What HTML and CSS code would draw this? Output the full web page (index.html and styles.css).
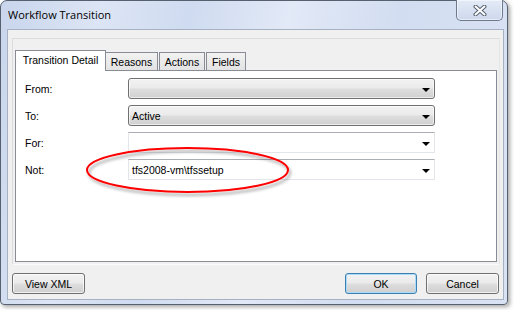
FILE: index.html
```
<!DOCTYPE html>
<html>
<head>
<meta charset="utf-8">
<link rel="stylesheet" href="styles.css">
</head>
<body>
<div class="window">
  <div class="titlebar">
    <span class="title">Workflow Transition</span>
    <div class="close">
      <svg width="14" height="11" viewBox="0 0 14 11">
        <path d="M2.5 1.5 L11.5 9.5 M11.5 1.5 L2.5 9.5" stroke="#55606e" stroke-width="4" stroke-linecap="round"/>
        <path d="M2.5 1.5 L11.5 9.5 M11.5 1.5 L2.5 9.5" stroke="#ffffff" stroke-width="2" stroke-linecap="round"/>
      </svg>
    </div>
  </div>
  <div class="client">
    <div class="group">
      <div class="tabs">
        <div class="tab selected">Transition Detail</div>
        <div class="tab t-reasons">Reasons</div>
        <div class="tab t-actions">Actions</div>
        <div class="tab t-fields">Fields</div>
      </div>
      <div class="panel">
        <div class="row">
          <span class="label">From:</span>
          <div class="combo list"><span class="value"></span><span class="arrow"></span></div>
        </div>
        <div class="row">
          <span class="label">To:</span>
          <div class="combo list"><span class="value">Active</span><span class="arrow"></span></div>
        </div>
        <div class="row">
          <span class="label">For:</span>
          <div class="combo edit"><span class="value"></span><span class="arrow"></span></div>
        </div>
        <div class="row">
          <span class="label">Not:</span>
          <div class="combo edit"><span class="value">tfs2008-vm\tfssetup</span><span class="arrow"></span></div>
        </div>
      </div>
    </div>
    <div class="buttons">
      <button class="btn btn-xml">View XML</button>
      <span class="spacer"></span>
      <button class="btn btn-ok">OK</button>
      <button class="btn btn-cancel">Cancel</button>
    </div>
  </div>
</div>
<svg class="highlight" width="230" height="70" viewBox="0 0 230 70">
  <defs>
    <filter id="sh" x="-10%" y="-30%" width="120%" height="160%">
      <feDropShadow dx="2" dy="3" stdDeviation="1.6" flood-color="#000" flood-opacity="0.35"/>
    </filter>
  </defs>
  <ellipse cx="107.5" cy="30" rx="100.5" ry="22" fill="none" stroke="#ff0000" stroke-width="2" filter="url(#sh)"/>
</svg>
</body>
</html>
```
FILE: styles.css
```
* { box-sizing: border-box; }
html, body { margin: 0; padding: 0; background: #ffffff; }
body {
  width: 514px;
  height: 310px;
  position: relative;
  overflow: hidden;
  font-family: "Liberation Sans", Arial, sans-serif;
  font-size: 10.5px;
  color: #000;
}
.window {
  width: 508px;
  height: 305px;
  border: 1px solid #56606e;
  border-radius: 7px 7px 4px 4px;
  background: linear-gradient(100deg, #c8d5ec 0%, #dce5f5 18%, #cfdbf0 34%, #e2e9f7 52%, #d2ddf1 72%, #dae3f4 100%);
  box-shadow: 2px 2px 4px rgba(0,0,0,0.35);
  padding: 0 3px 4px 6px;
  display: flex;
  flex-direction: column;
}
.titlebar {
  height: 28px;
  display: flex;
  align-items: flex-start;
}
.title {
  font-family: "Open Sans", "Noto Sans", sans-serif;
  font-size: 11px;
  line-height: 16px;
  margin-top: 6px;
  padding-left: 1px;
  color: #000;
}
.close {
  margin-left: auto;
  margin-right: 1px;
  margin-top: -1px;
  width: 47px;
  height: 21px;
  border: 1px solid #6d7a8e;
  border-top: none;
  border-radius: 0 0 5px 5px;
  background: linear-gradient(#e4ebf7, #cdd8ec);
  box-shadow: inset 0 0 0 1px rgba(255,255,255,0.5);
  display: flex;
  align-items: center;
  justify-content: center;
}
.client {
  height: 271px;
  border: 1px solid #a6b1c2;
  background: #f0f0f0;
  display: flex;
  flex-direction: column;
}
.group {
  margin: 8px 3px 0 4px;
  height: 227px;
  border: 1px solid #dcdcdc;
  border-right-color: #e6e6e6;
  border-bottom-color: #fbfbfb;
  padding: 11px 2px 2px 1px;
  display: flex;
  flex-direction: column;
}
.tabs {
  height: 20px;
  display: flex;
  align-items: flex-end;
  padding-left: 1px;
  position: relative;
  z-index: 2;
}
.tab {
  height: 18px;
  border: 1px solid #898c95;
  border-bottom: none;
  background: linear-gradient(#f2f2f2, #e3e3e3);
  display: flex;
  align-items: center;
  justify-content: center;
  line-height: 1;
  padding-top: 1px;
}
.tab.selected {
  width: 91px;
  height: 21px;
  margin-bottom: -1px;
  background: #fff;
  padding-top: 0;
  padding-bottom: 2px;
}
.t-reasons { width: 52px; border-left: none; }
.t-actions { width: 46px; margin-left: 1px; }
.t-fields { width: 40px; margin-left: 1px; }
.panel {
  height: 192px;
  margin-left: 1px;
  border: 1px solid #898c95;
  background: #fff;
  padding: 7px 0 0 9px;
  display: flex;
  flex-direction: column;
  gap: 6px;
  position: relative;
  z-index: 1;
}
.row {
  height: 21px;
  display: flex;
  align-items: center;
}
.label {
  width: 103px;
  padding-top: 1px;
}
.combo {
  width: 307px;
  height: 21px;
  display: flex;
  align-items: center;
  padding: 0 4px 0 3px;
}
.combo.list {
  border: 1px solid #707070;
  border-radius: 3px;
  background: linear-gradient(#f3f3f3 0%, #ebebeb 45%, #dddddd 55%, #d0d0d0 100%);
  box-shadow: inset 0 0 0 1px rgba(255,255,255,0.6);
}
.combo.edit {
  border: 1px solid #e2e6eb;
  border-top-color: #abadb3;
  background: #fff;
}
.value {
  flex: 1;
  padding-top: 1px;
}
.arrow {
  width: 0;
  height: 0;
  border-left: 4px solid transparent;
  border-right: 4px solid transparent;
  border-top: 4px solid #000;
  margin-top: 2px;
}
.buttons {
  margin: 8px 4px 0 4px;
  height: 21px;
  display: flex;
}
.spacer { flex: 1; }
.btn {
  height: 21px;
  border: 1px solid #707070;
  border-radius: 3px;
  background: linear-gradient(#f2f2f2 0%, #ebebeb 45%, #dddddd 55%, #cfcfcf 100%);
  box-shadow: inset 0 0 0 1px rgba(255,255,255,0.7);
  font-family: "Liberation Sans", Arial, sans-serif;
  font-size: 10.5px;
  color: #000;
  padding: 0;
  margin: 0;
}
.btn-xml { width: 73px; }
.btn-ok {
  width: 72px;
  border-color: #3c7fb1;
  box-shadow: inset 0 0 0 1px #a8dcf8;
}
.btn-cancel { width: 73px; margin-left: 9px; }
.highlight {
  position: absolute;
  left: 80px;
  top: 140px;
  z-index: 10;
}
```
